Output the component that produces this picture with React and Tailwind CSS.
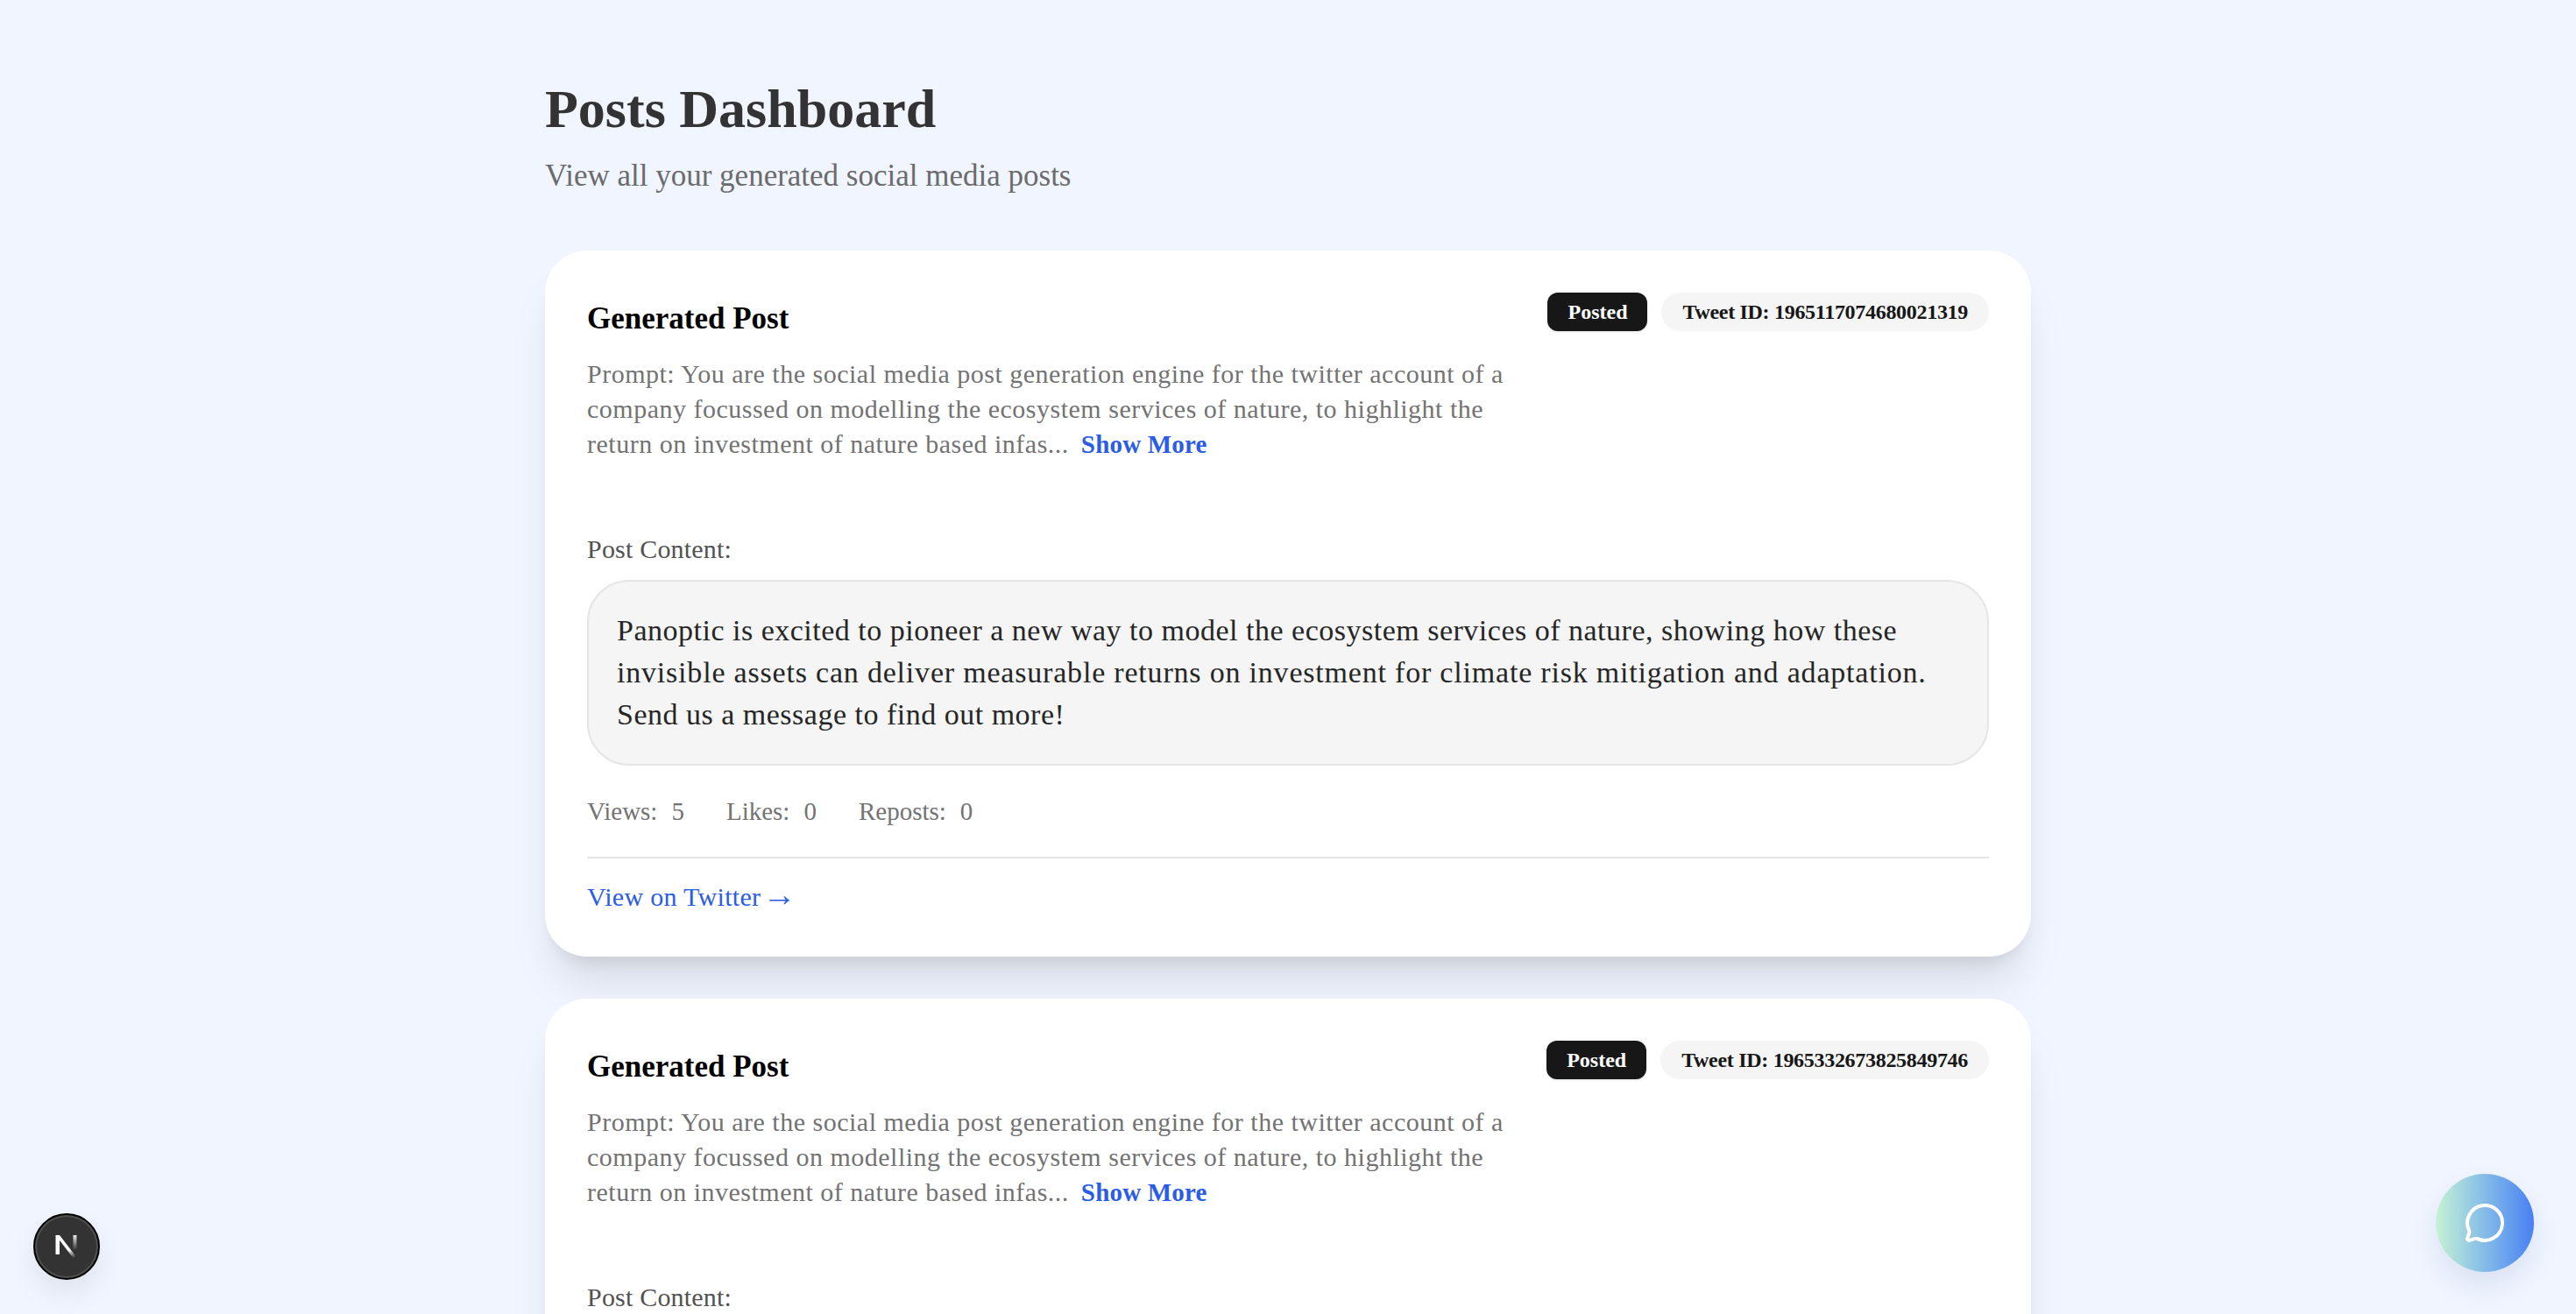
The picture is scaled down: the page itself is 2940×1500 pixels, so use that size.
import React from 'react';
import { MessageCircle } from 'lucide-react';

const posts = [
  { id: '1965117074680021319', views: 5, likes: 0, reposts: 0 },
  { id: '1965332673825849746', views: 5, likes: 0, reposts: 0 },
];

const PostCard = ({ post }) => (
  <div className="bg-white rounded-[48px] p-12 shadow-[0_40px_50px_-10px_rgba(0,0,0,0.1),0_16px_20px_-12px_rgba(0,0,0,0.1)]">
    <div className="flex justify-between items-start mb-20">
      <div>
        <h2 className="text-[35px] leading-[60px] font-bold text-black">Generated Post</h2>
        <p className="mt-[13px] text-[30px] leading-[40px] text-[#737373] tracking-[0.5px]">
          Prompt: You are the social media post generation engine for the twitter account of a<br />
          company focussed on modelling the ecosystem services of nature, to highlight the<br />
          return on investment of nature based infas... <span className="ml-[6px] text-[29px] tracking-[0.2px] font-bold text-[#2b5ce6]">Show More</span>
        </p>
      </div>
      <div className="flex items-center gap-4">
        <span className="h-11 px-[23px] flex items-center rounded-xl bg-[#171717] text-white text-2xl font-bold shadow-sm">Posted</span>
        <span className="h-11 px-6 flex items-center rounded-full bg-[#f5f5f5] text-[#171717] text-2xl tracking-[-0.3px] font-bold">Tweet ID: {post.id}</span>
      </div>
    </div>
    <p className="text-[30px] leading-[40px] text-[#525252] tracking-[0.2px] mb-[15px]">Post Content:</p>
    <div className="bg-[#f5f5f5] border-2 border-[#e5e5e5] rounded-[48px] p-8 text-[34px] leading-[48px] text-[#262626] tracking-[0.5px]">
      Panoptic is excited to pioneer a new way to model the ecosystem services of nature, showing how these<br />
      <span className="tracking-[0.8px]">invisible assets can deliver measurable returns on investment for climate risk mitigation and adaptation.</span><br />
      Send us a message to find out more!
    </div>
    <div className="flex gap-12 mt-8 text-[29px] leading-[40px] text-[#737373]">
      <div className="flex gap-4"><span>Views:</span><span>{post.views}</span></div>
      <div className="flex gap-4"><span>Likes:</span><span>{post.likes}</span></div>
      <div className="flex gap-4"><span>Reposts:</span><span>{post.reposts}</span></div>
    </div>
    <div className="border-t-2 border-[#e5e5e5] mt-8 pt-6">
      <a href="#" className="block text-[30px] leading-[40px] text-[#2b5ce6] tracking-[0.3px]">View on Twitter<span className="ml-[2px] text-[38px] leading-[0]">→</span></a>
    </div>
  </div>
);

export default function App() {
  return (
    <div className="relative h-screen overflow-hidden bg-[#f0f5ff] font-['Liberation_Serif',serif]">
      <div className="max-w-[1792px] mx-auto px-12 pt-[80px]">
        <h1 className="text-[62px] leading-[88px] font-bold text-[#333333] mb-[5px]">Posts Dashboard</h1>
        <p className="text-[35px] leading-[56px] text-[#6b6b6b] mb-[57px]">View all your generated social media posts</p>
        <div className="flex flex-col gap-12">
          {posts.map((post) => <PostCard key={post.id} post={post} />)}
        </div>
      </div>

      {/* dev indicator */}
      <div className="absolute left-[38px] bottom-[39px] w-[76px] h-[76px] rounded-full bg-[#333333] border-2 border-black shadow-[inset_0_0_0_2px_rgba(255,255,255,0.15),0_16px_32px_rgba(0,0,0,0.08)] flex items-center justify-center">
        <svg width="28" height="28" viewBox="0 0 28 28" fill="none">
          <defs>
            <linearGradient id="nDiag" x1="10" y1="6" x2="24" y2="26" gradientUnits="userSpaceOnUse">
              <stop offset="0.55" stopColor="#fff" />
              <stop offset="1" stopColor="#fff" stopOpacity="0" />
            </linearGradient>
            <linearGradient id="nRight" x1="23" y1="1" x2="23" y2="18" gradientUnits="userSpaceOnUse">
              <stop stopColor="#fff" stopOpacity="0.9" />
              <stop offset="1" stopColor="#fff" stopOpacity="0" />
            </linearGradient>
          </defs>
          <path d="M1.5 1H6v22H1.5z" fill="#fff" />
          <path d="M1.5 1H6L26 27h-4.5z" fill="url(#nDiag)" />
          <rect x="21.5" y="1" width="4" height="18" fill="url(#nRight)" />
        </svg>
      </div>

      {/* chat button */}
      <button className="absolute right-12 bottom-12 w-28 h-28 rounded-full bg-gradient-to-r from-[#c6f2d2] to-[#4a7ff2] flex items-center justify-center shadow-[0_16px_32px_rgba(30,60,120,0.1)]">
        <MessageCircle size={48} color="#fff" strokeWidth={2} />
      </button>
    </div>
  );
}
